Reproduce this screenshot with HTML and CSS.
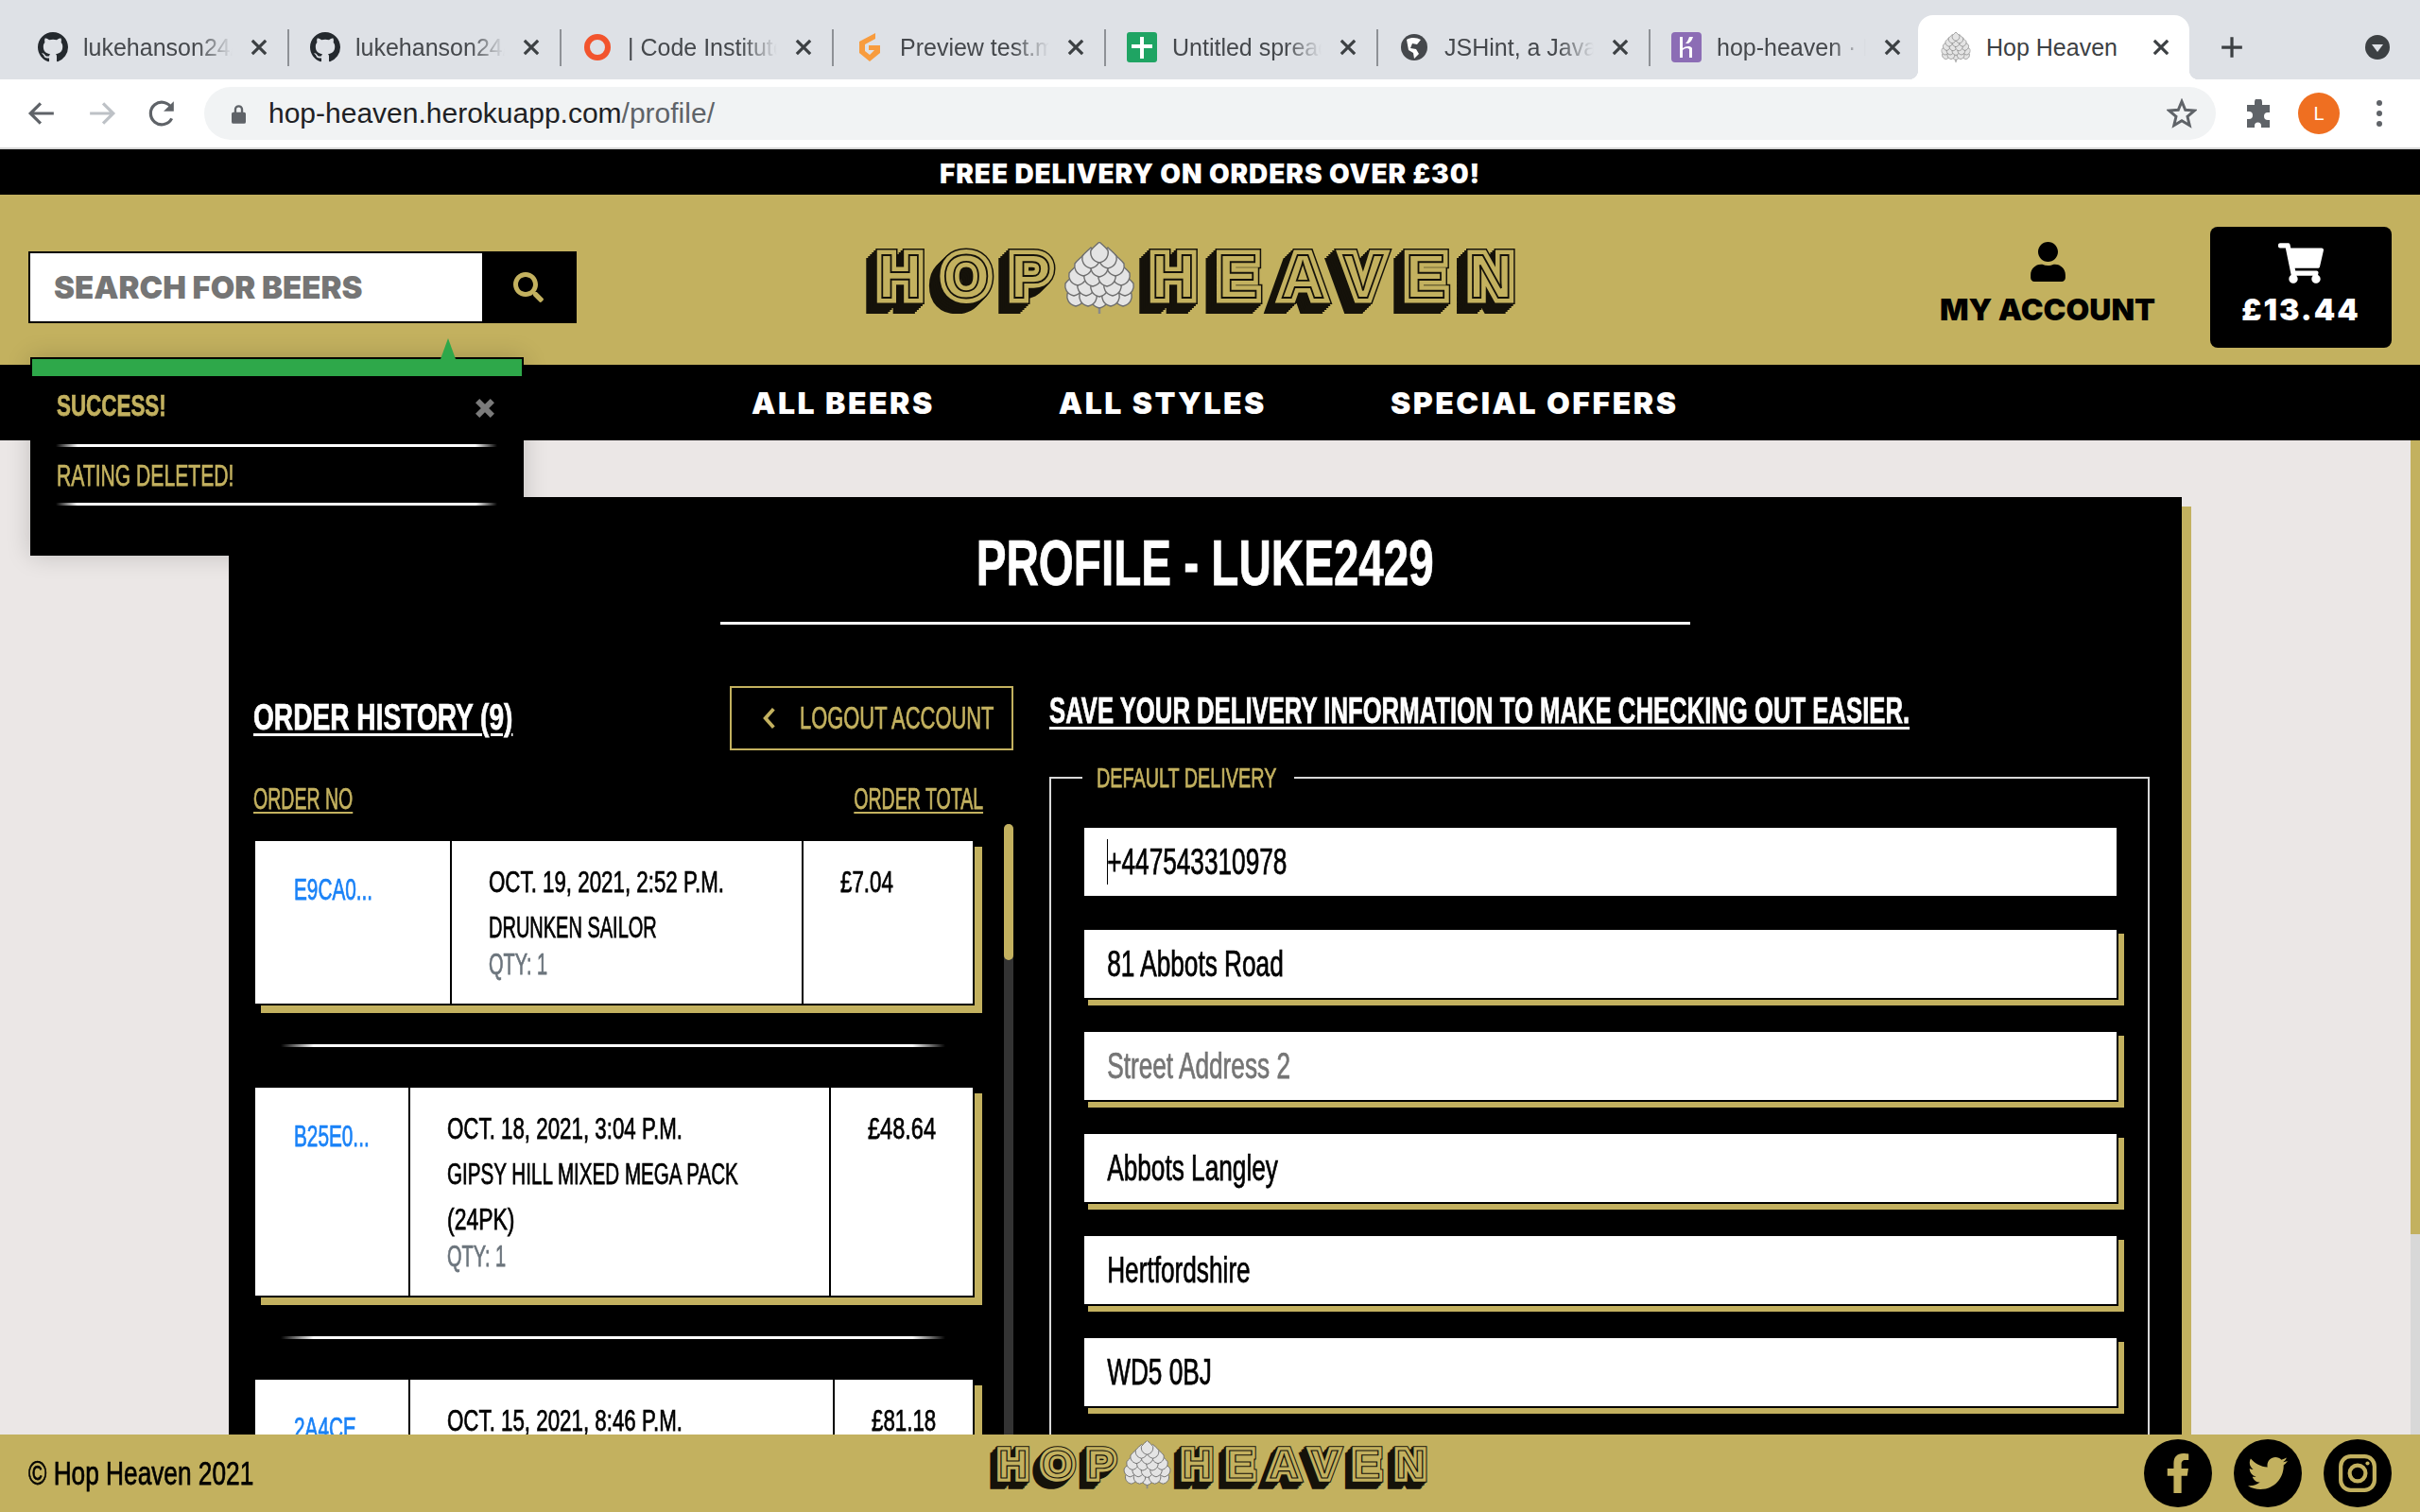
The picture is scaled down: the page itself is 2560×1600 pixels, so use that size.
FILE: index.html
```html
<!DOCTYPE html>
<html lang="en">
<head>
<meta charset="utf-8">
<title>Hop Heaven</title>
<link rel="stylesheet" href="styles.css">
</head>
<body>
<svg class="defs" aria-hidden="true">
  <defs>
    <path id="petal" d="M0 10 C-8 8 -10 2 -9 -3 C-6 -7 -3 -9 0 -12 C3 -9 6 -7 9 -3 C10 2 8 8 0 10Z"/>
    <symbol id="cone" viewBox="0 0 74 76">
      <path class="cone-stem" d="M37 66 V76"/>
      <g class="cone-petals">
        <use href="#petal" x="12" y="58"/><use href="#petal" x="62" y="58"/>
        <use href="#petal" x="37" y="60"/><use href="#petal" x="25" y="58"/><use href="#petal" x="49" y="58"/>
        <use href="#petal" x="10" y="47"/><use href="#petal" x="64" y="47"/>
        <use href="#petal" x="23" y="47"/><use href="#petal" x="37" y="48"/><use href="#petal" x="51" y="47"/>
        <use href="#petal" x="14" y="36"/><use href="#petal" x="60" y="36"/>
        <use href="#petal" x="30" y="37"/><use href="#petal" x="45" y="37"/>
        <use href="#petal" x="20" y="26"/><use href="#petal" x="54" y="26"/>
        <use href="#petal" x="37" y="27"/>
        <use href="#petal" x="28" y="18"/><use href="#petal" x="46" y="18"/>
        <use href="#petal" x="37" y="12"/>
      </g>
    </symbol>
    <text id="lw1" class="logo-word logo-hop" x="15" y="59">HOP</text>
    <text id="lw2" class="logo-word logo-heaven" x="304" y="59">HEAVEN</text>
    <symbol id="logo" viewBox="0 0 697 76">
      <g class="logo-depth">
        <use href="#lw1" x="-10" y="10"/><use href="#lw2" x="-10" y="10"/>
        <use href="#lw1" x="-8" y="8"/><use href="#lw2" x="-8" y="8"/>
        <use href="#lw1" x="-6" y="6"/><use href="#lw2" x="-6" y="6"/>
        <use href="#lw1" x="-4" y="4"/><use href="#lw2" x="-4" y="4"/>
        <use href="#lw1" x="-2" y="2"/><use href="#lw2" x="-2" y="2"/>
        <use href="#lw1"/><use href="#lw2"/>
      </g>
      <g class="logo-face"><use href="#lw1"/><use href="#lw2"/></g>
      <g class="logo-inline"><use href="#lw1"/><use href="#lw2"/></g>
      <use href="#cone" x="211" y="0" width="76" height="76"/>
    </symbol>
    <path id="x-mark" d="M2 2 L12 12 M12 2 L2 12"/>
    <path id="gh" d="M8 0C3.58 0 0 3.58 0 8c0 3.54 2.29 6.53 5.47 7.59.4.07.55-.17.55-.38 0-.19-.01-.82-.01-1.49-2.01.37-2.53-.49-2.69-.94-.09-.23-.48-.94-.82-1.13-.28-.15-.68-.52-.01-.53.63-.01 1.08.58 1.23.82.72 1.21 1.87.87 2.33.66.07-.52.28-.87.51-1.07-1.78-.2-3.64-.89-3.64-3.95 0-.87.31-1.59.82-2.15-.08-.2-.36-1.02.08-2.12 0 0 .67-.21 2.2.82.64-.18 1.32-.27 2-.27.68 0 1.36.09 2 .27 1.53-1.04 2.2-.82 2.2-.82.44 1.1.16 1.92.08 2.12.51.56.82 1.27.82 2.15 0 3.07-1.87 3.75-3.65 3.95.29.25.54.73.54 1.48 0 1.07-.01 1.93-.01 2.2 0 .21.15.46.55.38A8.013 8.013 0 0016 8c0-4.42-3.58-8-8-8z"/>
  </defs>
</svg>

<div class="browser">
  <div class="tabstrip">
    <div class="tab"><svg class="fav" viewBox="0 0 16 16"><use href="#gh" class="fav-dark"/></svg><span class="tab-title">lukehanson24/hop</span><svg class="tab-x" viewBox="0 0 14 14"><use href="#x-mark"/></svg></div>
    <div class="tab"><svg class="fav" viewBox="0 0 16 16"><use href="#gh" class="fav-dark"/></svg><span class="tab-title">lukehanson24/hop</span><svg class="tab-x" viewBox="0 0 14 14"><use href="#x-mark"/></svg></div>
    <div class="tab"><svg class="fav" viewBox="0 0 32 32"><circle class="fav-ring" cx="16" cy="16" r="11"/></svg><span class="tab-title">| Code Institute</span><svg class="tab-x" viewBox="0 0 14 14"><use href="#x-mark"/></svg></div>
    <div class="tab"><svg class="fav" viewBox="0 0 32 32"><path class="fav-g" d="M22 1 L5 10 V22 L16 31 L27 22 V14 H15 V19 H21 L16 24 L11 20 V13 L22 7Z"/></svg><span class="tab-title">Preview test.md</span><svg class="tab-x" viewBox="0 0 14 14"><use href="#x-mark"/></svg></div>
    <div class="tab"><svg class="fav" viewBox="0 0 32 32"><rect class="fav-sheet" width="32" height="32" rx="3"/><path class="fav-white" d="M14 5h4v8h9v4h-9v11h-4V17H5v-4h9z"/></svg><span class="tab-title">Untitled spreadsheet</span><svg class="tab-x" viewBox="0 0 14 14"><use href="#x-mark"/></svg></div>
    <div class="tab"><svg class="fav" viewBox="0 0 32 32"><circle class="fav-globe" cx="16" cy="16" r="14"/><path class="fav-white" d="M8 8 C13 5 19 6 23 8 L19 13 L14 12 L12 17 L18 18 L21 23 L16 28 L15 22 L10 19Z"/></svg><span class="tab-title">JSHint, a JavaScript</span><svg class="tab-x" viewBox="0 0 14 14"><use href="#x-mark"/></svg></div>
    <div class="tab"><svg class="fav" viewBox="0 0 32 32"><rect class="fav-heroku" width="32" height="32" rx="4"/><path class="fav-white" d="M9 5h3v12c3-2 8-3 10 0v10h-3V18c-2-2-5-1-7 1v8H9zM19 5h4c-1 3-2 5-5 7h-3c2-2 3-4 4-7z"/></svg><span class="tab-title">hop-heaven · Heroku</span><svg class="tab-x" viewBox="0 0 14 14"><use href="#x-mark"/></svg></div>
    <div class="tab tab-active"><svg class="fav" viewBox="0 0 74 76"><use href="#cone"/></svg><span class="tab-title tab-title-full">Hop Heaven</span><svg class="tab-x" viewBox="0 0 14 14"><use href="#x-mark"/></svg></div>
    <svg class="tab-new" viewBox="0 0 24 24"><path d="M12 2V22M2 12H22"/></svg>
    <svg class="tab-menu" viewBox="0 0 26 26"><circle cx="13" cy="13" r="13"/><path d="M7 10H19L13 18Z"/></svg>
  </div>
  <div class="toolbar">
    <svg class="tool-ico" viewBox="0 0 28 28"><path d="M26 14H4M13 4L3 14L13 24"/></svg>
    <svg class="tool-ico tool-ico-off" viewBox="0 0 28 28"><path d="M2 14H24M15 4L25 14L15 24"/></svg>
    <svg class="tool-ico tool-reload" viewBox="0 0 28 28"><path d="M23 19A11 11 0 1 1 23 9"/><path class="tool-fill" d="M25 2V12H15Z"/></svg>
    <div class="omnibox">
      <svg class="lock" viewBox="0 0 16 22"><path d="M3 9V6a5 5 0 0 1 10 0v3h1a2 2 0 0 1 2 2v9a2 2 0 0 1-2 2H2a2 2 0 0 1-2-2v-9a2 2 0 0 1 2-2zm2.500 0h5V6a2.500 2.500 0 0 0-5 0z"/></svg>
      <span class="url">hop-heaven.herokuapp.com<span class="url-path">/profile/</span></span>
      <svg class="star" viewBox="0 0 24 24"><path d="M12 2.500L14.800 9.200 22 9.800 16.500 14.500 18.200 21.500 12 17.800 5.800 21.500 7.500 14.500 2 9.800 9.200 9.200Z"/></svg>
    </div>
    <svg class="puzzle" viewBox="0 0 30 30"><path d="M11 3a4 4 0 0 1 8 0v3h8v8h-2a4 4 0 0 0 0 8h2v8H18v-2a3.500 3.500 0 0 0-7 0v2H3V21h2a4 4 0 0 0 0-8H3V6h8z"/></svg>
    <div class="avatar">L</div>
    <svg class="dots" viewBox="0 0 8 30"><circle cx="4" cy="4" r="3"/><circle cx="4" cy="15" r="3"/><circle cx="4" cy="26" r="3"/></svg>
  </div>
</div>

<div class="site">
  <div class="banner">FREE DELIVERY ON ORDERS OVER £30!</div>
  <header class="head">
    <form class="search">
      <input class="search-input" type="text" placeholder="SEARCH FOR BEERS">
      <span class="search-btn"><svg viewBox="0 0 512 512"><path d="M505 442.700L405.300 343c-4.500-4.500-10.600-7-17-7H372c27.600-35.300 44-79.700 44-128C416 93.100 322.900 0 208 0S0 93.100 0 208s93.100 208 208 208c48.300 0 92.700-16.400 128-44v16.300c0 6.400 2.500 12.500 7 17l99.700 99.700c9.400 9.400 24.600 9.400 33.900 0l28.300-28.300c9.400-9.400 9.400-24.600.1-34zM208 336c-70.700 0-128-57.200-128-128 0-70.700 57.200-128 128-128 70.700 0 128 57.200 128 128 0 70.700-57.200 128-128 128z"/></svg></span>
    </form>
    <svg class="logo-main" role="img" aria-label="Hop Heaven"><use href="#logo"/></svg>
    <div class="account">
      <svg viewBox="0 0 448 512"><path d="M224 256c70.700 0 128-57.300 128-128S294.700 0 224 0 96 57.300 96 128s57.300 128 128 128zm89.600 32h-16.700c-22.200 10.200-46.900 16-72.900 16s-50.600-5.800-72.900-16h-16.700C60.200 288 0 348.200 0 422.400V464c0 26.500 21.500 48 48 48h352c26.500 0 48-21.500 48-48v-41.600c0-74.200-60.200-134.400-134.400-134.400z"/></svg>
      <span>MY ACCOUNT</span>
    </div>
    <div class="cart">
      <svg viewBox="0 0 576 512"><path d="M528.120 301.319l47.273-208C578.806 78.301 567.391 64 551.990 64H159.208l-9.166-44.810C147.758 8.021 137.930 0 126.529 0H24C10.745 0 0 10.745 0 24v16c0 13.255 10.745 24 24 24h69.883l70.248 343.435C147.325 417.100 136 435.222 136 456c0 30.928 25.072 56 56 56s56-25.072 56-56c0-15.674-6.447-29.835-16.824-40h209.647C430.447 426.165 424 440.326 424 456c0 30.928 25.072 56 56 56s56-25.072 56-56c0-22.172-12.888-41.332-31.579-50.405l5.517-24.276c3.413-15.018-8.002-29.319-23.403-29.319H218.117l-6.545-32h293.145c11.206 0 20.920-7.754 23.403-18.681z"/></svg>
      <span>£13.44</span>
    </div>
  </header>
  <nav class="nav">
    <a>ALL BEERS</a>
    <a>ALL STYLES</a>
    <a>SPECIAL OFFERS</a>
  </nav>

  <aside class="toast">
    <span class="toast-arrow"></span>
    <div class="toast-bar"></div>
    <div class="toast-head"><strong class="cx sx70">SUCCESS!</strong><svg viewBox="0 0 14 14"><use href="#x-mark"/></svg></div>
    <div class="fade-rule toast-rule"></div>
    <p class="toast-msg"><span class="cx sx66">RATING DELETED!</span></p>
    <div class="fade-rule toast-rule"></div>
  </aside>

  <div class="viewport">
    <main class="scroller">
      <section class="card">
        <h1 class="title"><span class="cx cx-c sx70">PROFILE - LUKE2429</span></h1>
        <div class="title-rule"></div>
        <div class="columns">
          <div class="orders">
            <div class="orders-top">
              <h2 class="under-head orders-head"><span class="cx sx74">ORDER HISTORY (9)</span></h2>
              <a class="logout"><svg viewBox="0 0 14 24"><path d="M11 3L3 12L11 21"/></svg><span class="cx sx645">LOGOUT ACCOUNT</span></a>
            </div>
            <div class="orders-cols"><span class="cx sx63">ORDER NO</span><span class="cx cx-r sx63">ORDER TOTAL</span></div>
            <div class="orders-body">
              <div class="orders-list">
                <article class="order order-a">
                  <div class="cell cell-id"><a class="cx sx67">E9CA0...</a></div>
                  <div class="cell"><p class="cx sx72">OCT. 19, 2021, 2:52 P.M.</p><p class="cx sx645">DRUNKEN SAILOR</p><p class="qty cx sx645">QTY: 1</p></div>
                  <div class="cell"><p class="cx sx72">£7.04</p></div>
                </article>
                <div class="fade-rule order-rule"></div>
                <article class="order order-b">
                  <div class="cell cell-id"><a class="cx sx67">B25E0...</a></div>
                  <div class="cell"><p class="cx sx72">OCT. 18, 2021, 3:04 P.M.</p><p class="cx sx665">GIPSY HILL MIXED MEGA PACK</p><p class="cx sx74">(24PK)</p><p class="qty cx sx645">QTY: 1</p></div>
                  <div class="cell"><p class="cx sx76">£48.64</p></div>
                </article>
                <div class="fade-rule order-rule"></div>
                <article class="order order-c">
                  <div class="cell cell-id"><a class="cx sx67">2A4CE...</a></div>
                  <div class="cell"><p class="cx sx72">OCT. 15, 2021, 8:46 P.M.</p></div>
                  <div class="cell"><p class="cx sx72">£81.18</p></div>
                </article>
              </div>
              <div class="list-scroll"><span></span></div>
            </div>
          </div>
          <div class="delivery">
            <h2 class="under-head delivery-head"><span class="cx sx676">SAVE YOUR DELIVERY INFORMATION TO MAKE CHECKING OUT EASIER.</span></h2>
            <fieldset class="fields">
              <legend><span class="cx sx66">DEFAULT DELIVERY</span></legend>
              <div class="field field-focus"><input type="text" value="+447543310978"></div>
              <div class="field"><input type="text" value="81 Abbots Road"></div>
              <div class="field"><input type="text" placeholder="Street Address 2"></div>
              <div class="field"><input type="text" value="Abbots Langley"></div>
              <div class="field"><input type="text" value="Hertfordshire"></div>
              <div class="field"><input type="text" value="WD5 0BJ"></div>
            </fieldset>
          </div>
        </div>
      </section>
    </main>
    <div class="page-scroll"><span></span></div>
  </div>

  <footer class="foot">
    <span class="copy"><span class="cx sx75">© Hop Heaven 2021</span></span>
    <svg class="logo-foot" role="img" aria-label="Hop Heaven"><use href="#logo"/></svg>
    <div class="social">
      <a><svg viewBox="0 0 320 512"><path d="M279.140 288l14.220-92.660h-88.910v-60.130c0-25.350 12.420-50.060 52.240-50.060h40.420V6.260S260.430 0 225.360 0c-73.220 0-121.080 44.380-121.080 124.720v70.620H22.890V288h81.390v224h100.170V288z"/></svg></a>
      <a><svg viewBox="0 0 512 512"><path d="M459.370 151.716c.325 4.548.325 9.097.325 13.645 0 138.720-105.583 298.558-298.558 298.558-59.452 0-114.680-17.219-161.137-47.106 8.447.974 16.568 1.299 25.340 1.299 49.055 0 94.213-16.568 130.274-44.832-46.132-.975-84.792-31.188-98.112-72.772 6.498.974 12.995 1.624 19.818 1.624 9.421 0 18.843-1.300 27.614-3.573-48.081-9.747-84.143-51.980-84.143-102.985v-1.299c13.969 7.797 30.214 12.670 47.431 13.319-28.264-18.843-46.781-51.005-46.781-87.391 0-19.492 5.197-37.360 14.294-52.954 51.655 63.675 129.300 105.258 216.365 109.807-1.624-7.797-2.599-15.918-2.599-24.040 0-57.828 46.782-104.934 104.934-104.934 30.213 0 57.502 12.670 76.670 33.137 23.715-4.548 46.456-13.320 66.599-25.340-7.798 24.366-24.366 44.833-46.132 57.827 21.117-2.273 41.584-8.122 60.426-16.243-14.292 20.791-32.161 39.308-52.628 54.253z"/></svg></a>
      <a><svg class="insta" viewBox="0 0 40 40"><rect x="3" y="3" width="34" height="34" rx="10"/><circle cx="20" cy="20" r="8"/><circle class="insta-dot" cx="30" cy="10" r="2"/></svg></a>
    </div>
  </footer>
</div>
</body>
</html>
```

FILE: styles.css
```css
:root {
  --gold: #c3b15f;
  --page: #ebe7e6;
  --narrow: "Liberation Sans", sans-serif;
  --block: Inter, "Open Sans", sans-serif;
}
* { box-sizing: border-box; }
html, body { margin: 0; height: 1600px; overflow: hidden; background: #000; }
body { display: flex; flex-direction: column; font-family: var(--narrow); }
p, h1, h2 { margin: 0; }
.defs { position: absolute; width: 0; height: 0; }

/* Condensed display text: the tall narrow face is made from the sans by horizontal scaling */
.cx { display: inline-block; white-space: nowrap; transform: scaleX(var(--sx, .7)); transform-origin: 0 50%; -webkit-text-stroke: .75px currentColor; }
.cx-c { transform-origin: 50% 50%; }
.cx-r { transform-origin: 100% 50%; }
.sx63 { --sx: .63; }
.sx645 { --sx: .645; }
.sx66 { --sx: .66; }
.sx665 { --sx: .665; }
.sx67 { --sx: .67; }
.sx676 { --sx: .676; }
.sx70 { --sx: .70; }
.sx72 { --sx: .72; }
.sx74 { --sx: .74; }
.sx75 { --sx: .75; }
.sx76 { --sx: .76; }

/* ---------- browser chrome ---------- */
.browser { height: 158px; flex: none; font-family: "Liberation Sans", sans-serif; background: #fff; border-bottom: 2px solid #d6d6d6; }
.tabstrip { height: 84px; display: flex; background: #dee1e6; padding: 16px 0 0 16px; position: relative; }
.tab { width: 288px; height: 68px; display: flex; align-items: center; padding: 0 20px 0 24px; position: relative; color: #45484c; font-size: 25px; }
.tab + .tab::before { content: ""; position: absolute; left: 0; top: 15px; height: 39px; width: 1.500px; background: #8e9196; }
.tab-active { width: 287px; margin-left: -3px; background: #fff; border-radius: 16px 16px 0 0; color: #3c4043; }
.tab-active::before { display: none; }
.tab-active::after { content: ""; position: absolute; left: -10px; right: -10px; bottom: 0; height: 10px; z-index: 0;
  background:
    radial-gradient(circle at 0 0, #dee1e6 10px, #fff 10.500px) left bottom / 10px 10px no-repeat,
    radial-gradient(circle at 100% 0, #dee1e6 10px, #fff 10.500px) right bottom / 10px 10px no-repeat; }
.fav { width: 32px; height: 32px; flex: none; margin-right: 16px; }
.fav-dark { fill: #24292e; }
.fav-ring { fill: none; stroke: #f2542d; stroke-width: 6px; }
.fav-g { fill: #f89c3e; }
.fav-sheet { fill: #1fa463; }
.fav-white { fill: #fff; }
.fav-globe { fill: #45484c; }
.fav-heroku { fill: #8c6db5; }
.tab-title { flex: none; width: 158px; white-space: nowrap; overflow: hidden; -webkit-mask-image: linear-gradient(90deg, #000 76%, transparent 100%); mask-image: linear-gradient(90deg, #000 76%, transparent 100%); }
.tab-title-full { -webkit-mask-image: none; mask-image: none; }
.tab-x { width: 20px; height: 20px; margin-left: auto; fill: none; stroke: #3c4043; stroke-width: 2.200px; }
.tab-new { width: 26px; height: 26px; margin: 21px 0 0 32px; fill: none; stroke: #3c4043; stroke-width: 3px; }
.tab-menu { width: 26px; height: 26px; margin: 21px 0 0 128px; }
.tab-menu circle { fill: #3c4043; }
.tab-menu path { fill: #dee1e6; }

.toolbar { height: 72px; display: flex; align-items: center; padding-left: 29px; background: #fff; }
.tool-ico { width: 30px; height: 30px; flex: none; margin-right: 34px; fill: none; stroke: #5f6368; stroke-width: 3px; }
.tool-ico-off { stroke: #bdc1c6; }
.tool-reload { margin-right: 29px; }
.tool-fill { fill: #5f6368; stroke: none; }
.omnibox { width: 2128px; height: 56px; border-radius: 28px; background: #f1f3f4; display: flex; align-items: center; padding: 0 20px 0 29px; flex: none; }
.lock { width: 15px; height: 21px; fill: #5f6368; flex: none; margin-right: 24px; }
.url { font-size: 30px; color: #202124; white-space: nowrap; }
.url-path { color: #5f6368; }
.star { width: 32px; height: 32px; margin-left: auto; fill: none; stroke: #5f6368; stroke-width: 2.200px; }
.puzzle { width: 30px; height: 30px; margin-left: 30px; fill: #5f6368; flex: none; }
.avatar { width: 44px; height: 44px; border-radius: 50%; margin-left: 27px; background: #ef6f21; color: #fff; font-size: 20px; display: flex; align-items: center; justify-content: center; flex: none; }
.dots { width: 8px; height: 30px; margin-left: 38px; fill: #5f6368; flex: none; }

/* ---------- site ---------- */
.site { flex: 1; min-height: 0; display: flex; flex-direction: column; position: relative; }
.banner { height: 48px; flex: none; background: #000; color: #fff; display: flex; align-items: center; justify-content: center; padding-top: 4px; font: 900 28px var(--block); letter-spacing: .9px; }
.head { height: 180px; flex: none; background: var(--gold); display: flex; align-items: flex-start; padding: 0 30px; }
.search { width: 580px; height: 76px; margin-top: 60px; display: flex; border: 2px solid #000; background: #000; flex: none; }
.search-input { flex: 1; min-width: 0; border: 0; outline: 0; background: #fff; padding: 0 25px; font: 900 33px var(--block); }
.search-input::placeholder { color: #757575; opacity: 1; }
.search-btn { width: 98px; display: flex; align-items: center; justify-content: center; flex: none; }
.search-btn svg { width: 32px; height: 32px; fill: var(--gold); }
.logo-main { width: 697px; height: 76px; margin: 50px 0 0 304px; flex: none; }
.logo-word { font: 700 64px var(--narrow); }
.logo-hop { letter-spacing: 22px; }
.logo-heaven { letter-spacing: 24px; }
.logo-depth { fill: #15120a; stroke: #15120a; stroke-width: 14px; stroke-linejoin: miter; stroke-miterlimit: 2.500; }
.logo-face { fill: var(--gold); stroke: var(--gold); stroke-width: 11px; stroke-linejoin: miter; stroke-miterlimit: 2.500; }
.logo-inline { fill: var(--gold); stroke: #15120a; stroke-width: 1.800px; }
.cone-stem { stroke: #8a8a8a; stroke-width: 2.500px; }
.cone-petals { fill: #e4e4e4; stroke: #6e6e6e; stroke-width: 1.400px; }
.account { width: 224px; margin: 50px 0 0 443px; display: flex; flex-direction: column; align-items: center; flex: none; font: 900 32px var(--block); color: #000; white-space: nowrap; }
.account svg { width: 37px; height: 42px; fill: #000; margin-bottom: 10px; }
.cart { width: 192px; height: 128px; margin: 34px 0 0 60px; background: #000; border-radius: 8px; color: #fff; display: flex; flex-direction: column; align-items: center; padding-top: 17px; flex: none; font: 900 32px var(--block); letter-spacing: 2px; white-space: nowrap; }
.cart svg { width: 48px; height: 43px; fill: #fff; margin-bottom: 8px; }
.nav { height: 80px; flex: none; background: #000; display: flex; align-items: center; padding-left: 795px; gap: 131px; color: #fff; font: 900 32px var(--block); letter-spacing: 2.500px; }

/* ---------- toast ---------- */
.toast { position: absolute; left: 32px; top: 220px; width: 522px; height: 210px; background: #000; color: var(--gold); z-index: 5; box-shadow: 0 0 24px rgba(0, 0, 0, .18); font-size: 32px; }
.toast-arrow { position: absolute; left: 434px; top: -20px; border: 8.500px solid transparent; border-top: 0; border-bottom: 22px solid #2ea84a; }
.toast-bar { height: 20px; background: #2ea84a; border: 2px solid #000; border-bottom: 0; }
.toast-head { height: 72px; display: flex; align-items: center; justify-content: space-between; padding: 0 30px 0 28px; }
.toast-head strong { margin-top: -10px; }
.toast-head svg { width: 22px; height: 22px; margin-top: -4px; fill: none; stroke: #7b7b7b; stroke-width: 3.800px; }
.toast-rule { margin: 0 28px 0 27px; }
.toast-msg { height: 59px; line-height: 61px; padding-left: 28px; }
.fade-rule { height: 3px; background: linear-gradient(90deg, transparent, #fff 5%, #fff 95%, transparent); }

/* ---------- page ---------- */
.viewport { flex: 1; min-height: 0; display: flex; background: var(--page); overflow: hidden; }
.scroller { flex: 1; min-width: 0; padding-top: 60px; }
.page-scroll { width: 10px; flex: none; background: #d8d8d8; }
.page-scroll span { display: block; height: 840px; background: var(--gold); }
.card { width: 2066px; height: 1100px; margin: 0 auto; background: #000; color: #fff; box-shadow: 10px 10px 0 var(--gold); }
.title { padding-top: 35px; text-align: center; font: 700 68px/68px var(--narrow); }
.title-rule { width: 1026px; height: 3px; margin: 29px auto 0; background: #fff; }
.columns { display: grid; grid-template-columns: 804px 1164px; column-gap: 38px; padding-left: 26px; margin-top: 65px; }
.under-head { font: 700 38px/48px var(--narrow); }
.orders-head { margin-top: -2px; }
.under-head .cx { text-decoration: underline; text-decoration-thickness: 3px; text-underline-offset: 4px; }
.orders-top { height: 68px; display: flex; align-items: center; justify-content: space-between; }
.logout { width: 300px; height: 68px; border: 2px solid var(--gold); color: var(--gold); display: flex; align-items: center; padding-left: 32px; font-size: 34px; white-space: nowrap; flex: none; }
.logout .cx { margin-top: -2px; }
.logout svg { width: 16px; height: 26px; margin-right: 24px; fill: none; stroke: var(--gold); stroke-width: 3.500px; flex: none; }
.orders-cols { display: flex; justify-content: space-between; width: 772px; margin-top: 34px; color: var(--gold); font-size: 31px; line-height: 36px; }
.orders-cols .cx { text-decoration: underline; text-decoration-thickness: 2px; text-underline-offset: 3px; }
.orders-body { display: flex; justify-content: space-between; height: 700px; margin-top: 8px; }
.orders-list { width: 763px; padding-top: 16px; flex: none; }
.list-scroll { width: 10px; background: #333; border-radius: 5px; flex: none; margin-left: 31px; }
.list-scroll span { display: block; height: 144px; border-radius: 5px; background: var(--gold); }
.order { display: grid; background: #fff; border: 2px solid #000; box-shadow: 8px 8px 0 var(--gold); color: #000; font-size: 31px; line-height: 48px; }
.order-a { grid-template-columns: 206px 372px 1fr; }
.order-b { grid-template-columns: 162px 445px 1fr; }
.order-c { grid-template-columns: 162px 449px 1fr; height: 200px; }
.cell { padding: 20px 10px 26px 39px; border-left: 2px solid #000; white-space: nowrap; min-width: 0; }
.cell p { display: block; width: max-content; }
.cell:first-child { border-left: 0; padding-left: 41px; }
.cell-id { padding-top: 28px; color: #1a82f7; }
.cell .qty { color: #6c757d; line-height: 30px; }
.order-rule { margin: 41px 31px 41px 29px; }
.delivery-head { margin-top: 2px; }
.fields { margin: 29px 0 0; padding: 33px 33px 40px; border: 2px solid #d8d8d8; min-width: 0; width: 1164px; }
.fields legend { width: 224px; padding: 0 0 0 15px; color: var(--gold); font-size: 30px; line-height: 36px; white-space: nowrap; }
.field { width: 1096px; height: 76px; margin-bottom: 32px; position: relative; border: 2px solid #000; background: #fff; box-shadow: 6px 6px 0 var(--gold); }
.field input { display: block; width: 158%; height: 72px; border: 0; outline: 0; background: transparent; padding: 0 0 0 35px; font: 400 38px var(--narrow); color: #000; transform: scaleX(.69); transform-origin: 0 50%; -webkit-text-stroke: .75px currentColor; }
.field input::placeholder { color: #757575; opacity: 1; }
.field-focus { box-shadow: none; }
.field-focus::after { content: ""; position: absolute; left: 24px; top: 12px; width: 1px; height: 48px; background: #000; }

/* ---------- footer ---------- */
.foot { height: 82px; flex: none; background: var(--gold); display: grid; grid-template-columns: 1fr 469px 1fr; align-items: center; padding: 0 30px; position: relative; }
.copy { color: #000; font-size: 35px; }
.logo-foot { width: 469px; height: 56px; margin-top: -18px; }
.social { display: flex; justify-content: flex-end; gap: 23px; }
.social a { width: 72px; height: 72px; border-radius: 50%; background: #000; display: flex; align-items: center; justify-content: center; }
.social svg { width: 42px; height: 42px; fill: var(--gold); }
.social .insta { fill: none; stroke: var(--gold); stroke-width: 4px; }
.insta-dot { fill: var(--gold); stroke: none; }
```
